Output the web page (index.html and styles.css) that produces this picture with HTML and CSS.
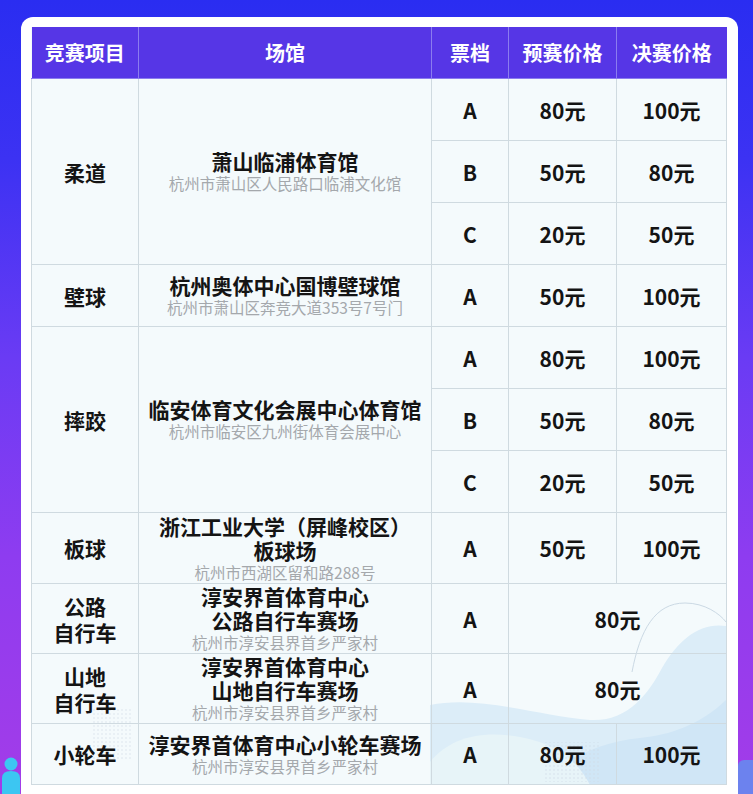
FILE: index.html
```html
<!DOCTYPE html>
<html lang="zh-CN">
<head>
<meta charset="utf-8">
<title>票价</title>
<link rel="stylesheet" href="styles.css">
</head>
<body>
<svg class="side-figure" width="24" height="40" viewBox="0 0 24 40">
  <circle cx="11" cy="10" r="6.5" fill="#3cc6f2"/>
  <path d="M2 40 L2 24 Q2 17 11 17 Q20 17 20 24 L20 40 Z" fill="#3cc6f2"/>
</svg>
<div class="side-block"></div>
<div class="page">
  <div class="card">
    <div class="tablewrap">
      <svg class="deco" width="695" height="758" viewBox="31 27 695 758">
        <defs>
          <pattern id="dots" width="4" height="4" patternUnits="userSpaceOnUse">
            <circle cx="2" cy="2" r="0.8" fill="#cfdbe5"/>
          </pattern>
        </defs>
        <path d="M430 705 C 480 695, 540 716, 590 720 C 628 722, 648 694, 662 668 C 678 640, 700 622, 726 626 L 726 785 L 430 785 Z" fill="#dcedf8"/>
        <path d="M540 785 C 560 760, 600 742, 640 738 C 670 735, 700 725, 726 700 L 726 785 Z" fill="#d0e6f6"/>
        <path d="M430 762 C 450 738, 480 730, 520 737 C 560 744, 580 765, 590 785 L 430 785 Z" fill="#e7f4f8"/>
        <path d="M632 672 C 640 630, 655 603, 685 603 C 705 603, 720 614, 726 622" fill="none" stroke="#cbd9e4" stroke-width="1"/>
        <rect x="93" y="707" width="40" height="53" fill="url(#dots)" opacity="0.7"/>
        <rect x="545" y="742" width="55" height="40" fill="url(#dots)" opacity="0.8"/>
      </svg>
      <table class="schedule">
        <colgroup>
          <col class="c1"><col class="c2"><col class="c3"><col class="c4"><col class="c5">
        </colgroup>
        <thead>
          <tr><th>竞赛项目</th><th>场馆</th><th>票档</th><th>预赛价格</th><th>决赛价格</th></tr>
        </thead>
        <tbody>
          <tr class="r62">
            <td rowspan="3" class="sport">柔道</td>
            <td rowspan="3" class="venue"><div class="name">萧山临浦体育馆</div><div class="addr">杭州市萧山区人民路口临浦文化馆</div></td>
            <td>A</td><td>80元</td><td>100元</td>
          </tr>
          <tr class="r62"><td>B</td><td>50元</td><td>80元</td></tr>
          <tr class="r62"><td>C</td><td>20元</td><td>50元</td></tr>
          <tr class="r62">
            <td class="sport">壁球</td>
            <td class="venue"><div class="name">杭州奥体中心国博壁球馆</div><div class="addr">杭州市萧山区奔竞大道353号7号门</div></td>
            <td>A</td><td>50元</td><td>100元</td>
          </tr>
          <tr class="r62">
            <td rowspan="3" class="sport">摔跤</td>
            <td rowspan="3" class="venue"><div class="name">临安体育文化会展中心体育馆</div><div class="addr">杭州市临安区九州街体育会展中心</div></td>
            <td>A</td><td>80元</td><td>100元</td>
          </tr>
          <tr class="r62"><td>B</td><td>50元</td><td>80元</td></tr>
          <tr class="r62"><td>C</td><td>20元</td><td>50元</td></tr>
          <tr class="r71">
            <td class="sport">板球</td>
            <td class="venue"><div class="name">浙江工业大学（屏峰校区）<br>板球场</div><div class="addr">杭州市西湖区留和路288号</div></td>
            <td>A</td><td>50元</td><td>100元</td>
          </tr>
          <tr class="r70">
            <td class="sport">公路<br>自行车</td>
            <td class="venue"><div class="name">淳安界首体育中心<br>公路自行车赛场</div><div class="addr">杭州市淳安县界首乡严家村</div></td>
            <td>A</td><td colspan="2">80元</td>
          </tr>
          <tr class="r70">
            <td class="sport">山地<br>自行车</td>
            <td class="venue"><div class="name">淳安界首体育中心<br>山地自行车赛场</div><div class="addr">杭州市淳安县界首乡严家村</div></td>
            <td>A</td><td colspan="2">80元</td>
          </tr>
          <tr class="r61">
            <td class="sport">小轮车</td>
            <td class="venue"><div class="name">淳安界首体育中心小轮车赛场</div><div class="addr">杭州市淳安县界首乡严家村</div></td>
            <td>A</td><td>80元</td><td>100元</td>
          </tr>
        </tbody>
      </table>
    </div>
  </div>
</div>
</body>
</html>
```

FILE: styles.css
```css
html, body {
  margin: 0;
  padding: 0;
  overflow: hidden;
}
html {
  background: linear-gradient(to bottom, #2a2df1 0%, #3c32f3 20%, #6a3bf4 45%, #8e3cf0 70%, #a33ce8 100%);
  min-height: 100%;
}
body {
  min-height: 794px;
  font-family: "Noto Sans CJK SC", "Noto Sans", sans-serif;
  position: relative;
}
.page {
  padding: 17px 0 0 21px;
  display: flex;
}
.card {
  width: 696px;
  background: #ffffff;
  border-radius: 12px 12px 0 0;
  padding: 10px 11px 10px 10px;
}
.tablewrap {
  position: relative;
  width: 695px;
  background: #f4fafc;
}
.deco {
  position: absolute;
  left: 0;
  top: 0;
  z-index: 0;
}
.schedule {
  position: relative;
  z-index: 1;
  width: 695px;
  table-layout: fixed;
  border-collapse: collapse;
  color: #141414;
}
.c1 { width: 107px; }
.c2 { width: 293px; }
.c3 { width: 77px; }
.c4 { width: 108px; }
.c5 { width: 110px; }
.schedule th {
  height: 51px;
  padding: 0;
  background: #5636e6;
  color: #ffffff;
  font-size: 20px;
  font-weight: 700;
  border: 1.5px solid #8b7cef;
  border-top: none;
  text-align: center;
  vertical-align: middle;
}
.schedule th:first-child { border-left: none; }
.schedule th:last-child { border-right: none; }
.schedule td {
  padding: 0 2px;
  border: 1.5px solid #cfdae0;
  text-align: center;
  vertical-align: middle;
  font-size: 21px;
  font-weight: 700;
  line-height: 26px;
}
.r62 { height: 62px; }
.r71 { height: 71px; }
.r70 { height: 70px; }
.r61 { height: 61px; }
.venue .name {
  line-height: 24px;
}
.venue .addr {
  font-size: 15.5px;
  font-weight: 400;
  color: #a4a8ac;
  line-height: 21px;
}
.side-figure {
  position: absolute;
  left: 0;
  top: 754px;
}
.side-block {
  position: absolute;
  left: 738px;
  top: 760px;
  width: 15px;
  height: 34px;
  background: #6c82ee;
  border-top-left-radius: 6px;
}
```
